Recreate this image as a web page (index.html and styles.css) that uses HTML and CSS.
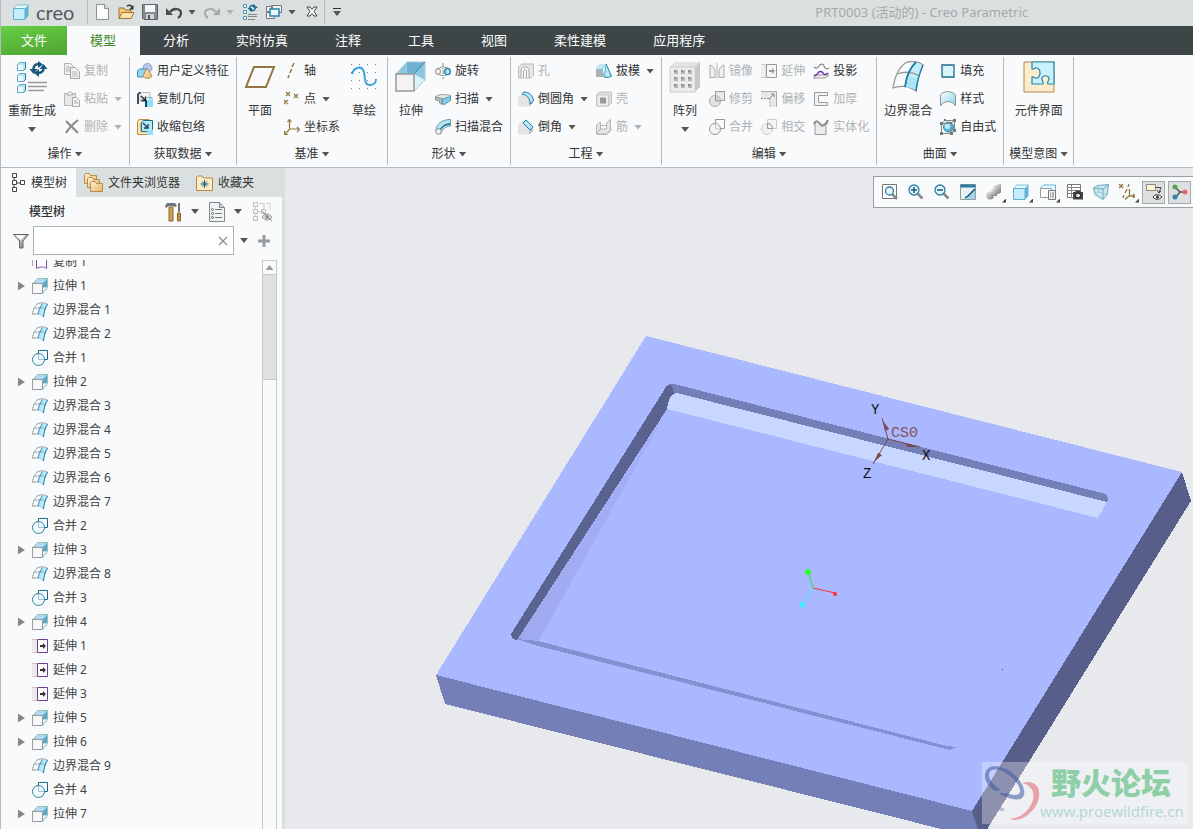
FILE: index.html
```html
<!DOCTYPE html>
<html lang="zh-CN">
<head>
    <meta charset="UTF-8">
    <meta name="viewport" content="width=device-width, initial-scale=1.0">
    <title>PRT0003 (活动的) - Creo Parametric</title>
    <link rel="stylesheet" href="styles.css">
</head>
<body>
    <!-- shared icons -->
    <svg class="defs" aria-hidden="true">
        <defs>
            <linearGradient id="blue" x1="0" y1="0" x2="1" y2="1">
                <stop offset="0" stop-color="#ffffff"/>
                <stop offset="1" stop-color="#86d3ee"/>
            </linearGradient>
            <linearGradient id="gold" x1="0" y1="0" x2="1" y2="1">
                <stop offset="0" stop-color="#fff3d6"/>
                <stop offset="1" stop-color="#e6b566"/>
            </linearGradient>
            <linearGradient id="gray" x1="0" y1="0" x2="1" y2="1">
                <stop offset="0" stop-color="#f4f4f4"/>
                <stop offset="1" stop-color="#777777"/>
            </linearGradient>
            <linearGradient id="wall" x1="0" y1="0" x2="1" y2="0.5">
                <stop offset="0" stop-color="#98a3e6"/>
                <stop offset="1" stop-color="#a7b2fb"/>
            </linearGradient>
        </defs>
        <symbol id="i-extrude" viewBox="0 0 32 32">
            <path d="M1 13 12 1h18v18L19 30z" fill="#c5e8f4"/>
            <path d="M1 13 12 1h18L19 13z" fill="#8cc8e0"/>
            <path d="M12 1h18v18H12z" fill="#6fb3d0"/>
            <path d="M19 13 30 1v18z" fill="#8dc6de"/>
            <path d="M19 13 30 19 19 30z" fill="#d9f3fb"/>
            <path d="M12 1h18v18L19 30M12 1 1 13" fill="none" stroke="#a9c9d6"/>
            <path d="M19 13 30 1" stroke="#2f87ab"/>
            <path d="M1 13h18v17H1z" fill="#f3f3f3" stroke="#999" stroke-width="1.5"/>
        </symbol>
        <symbol id="i-extrude-s" viewBox="0 0 16 16">
            <path d="M.500 5.500 6 .500h9.500v9L10.500 15z" fill="#a9dcee"/>
            <path d="M10.500 5.500 15.500.500v9l-5 0z" fill="#5fa9c9"/>
            <path d="M10.500 9.500h5l-5 5.500z" fill="#e0f6fd"/>
            <path d="M.500 5.500 6 .500h9.500v9l-5 6" fill="none" stroke="#9eb8c2"/>
            <path d="M.500 5.500h10v10H.500z" fill="#f7f7f7" stroke="#999"/>
        </symbol>
        <symbol id="i-blend" viewBox="0 0 32 32">
            <path d="M1 27C3 14 8 5 15 1c6-1 11-1 16 3-3 7-6 16-7 26-6-5-16-6-23-3z" fill="#f8fbfc" stroke="#999" stroke-width="1.3"/>
            <path d="M13 26c1-8 4-16 10-24 3 0 6 1 8 3-3 7-6 15-7 24-3-2-7-3-11-3z" fill="#c3edf9"/>
            <path d="M18 16c3 0 6 1 9 2l-3 11c-3-2-7-3-11-3 1-4 2-7 5-10z" fill="#a9e4f7"/>
            <path d="M5 13c8-3 17-2 22 2" fill="none" stroke="#999" stroke-width="1.3"/>
            <path d="M24 1C17 8 14 17 13 26" fill="none" stroke="#1a7ca5" stroke-width="1.8"/>
            <path d="M31 4c-3 7-6 16-7 26" fill="none" stroke="#1a7ca5" stroke-width="1.4"/>
        </symbol>
        <symbol id="i-blend-s" viewBox="0 0 16 16">
            <path d="M.500 12.500C1 7 3 3 6 1.500c3-1 6-1 9.500.500C13 6 12 10 11.500 15c-3-3-8-4-11-2.500z" fill="#f6fafc" stroke="#9a9fa2"/>
            <path d="M6 12c1-4 2-7 4.500-10.500l4.500.500C13 6 12 10 11.500 14.500z" fill="#b5e9f8"/>
            <path d="M2.500 6.500c4-1 8-1 11 .500" fill="none" stroke="#9a9fa2"/>
            <path d="M10.500 1.500C8 5 7 8 6 12M15.500 2C13 6 12 10 11.500 15" fill="none" stroke="#2b88ae"/>
        </symbol>
        <symbol id="i-merge" viewBox="0 0 16 16">
            <path d="M6.500.500h9v9h-9z" fill="#fff" stroke="#1c6a8a"/>
            <circle cx="6.500" cy="9.500" r="6" fill="#f2fafd" stroke="#2c7fa2"/>
            <path d="M6.500 4v5.500H12" fill="none" stroke="#9ccadd"/>
        </symbol>
        <symbol id="i-extend" viewBox="0 0 16 16">
            <path d="M0 1h5v14H0z" fill="#ebebeb"/>
            <path d="M0 1.500h5M0 14.500h5" stroke="#c4c4c4"/>
            <path d="M5.500 1.500h10v13h-10z" fill="#fff" stroke="#6f3f95"/>
            <path d="M8 7h3V5l3 3-3 3V9H8z" fill="#333"/>
        </symbol>
        <symbol id="i-cube" viewBox="0 0 16 16">
            <path d="M.500 4.500 4 1h11.500v11l-3.500 3.500z" fill="#5fb4d6"/>
            <path d="M.500 4.500 4 1h11.500L12 4.500z" fill="#e9fafe" stroke="#7cc4dd"/>
            <path d="M.500 4.500H12v11H.500z" fill="#c4eefb" stroke="#5fb0ce"/>
        </symbol>
        <symbol id="i-lens" viewBox="0 0 16 16">
            <path d="m9.500 9.500 5 5" stroke="#888" stroke-width="2.500"/>
            <circle cx="6" cy="6" r="5" fill="#e2f5fb" stroke="#2c7fa2" stroke-width="1.300"/>
        </symbol>
    </svg>

    <header class="titlebar">
        <div class="brand">
            <svg width="16" height="16"><use href="#i-cube"/></svg>
            <span>creo</span>
        </div>
        <div class="quick">
            <button aria-label="新建"><svg width="16" height="16" viewBox="0 0 16 16"><path d="M2.500.500h8l4 4v11h-12z" fill="#fcfcfc" stroke="#8d9193"/><path d="M10.500.500v4h4" fill="#ddd" stroke="#8d9193"/></svg></button>
            <button aria-label="打开"><svg width="16" height="16" viewBox="0 0 16 16"><path d="M1 14V4h5l1 2h6v8z" fill="#f5c773" stroke="#9d7430"/><path d="m1 14.500 3-6h12l-3 6z" fill="#fbe2a8" stroke="#9d7430"/><path d="M9 2c2-1 4-1 5 1" fill="none" stroke="#333" stroke-width="1.500"/><path d="M15.500 1v4.500H11z" fill="#333"/></svg></button>
            <button aria-label="保存"><svg width="16" height="16" viewBox="0 0 16 16"><path d="M.500.500h15v15H2l-1.500-1.500z" fill="#858b92" stroke="#5d6267"/><path d="M3 1h10v7H3z" fill="#f7f7f7"/><path d="M4 10h8v5H4z" fill="#cfd3d6"/><path d="M6 11h2v4H6z" fill="#555"/></svg></button>
            <span class="pair">
                <button aria-label="撤消"><svg width="16" height="16" viewBox="0 0 16 16"><path d="M4 8c4-5 11-3 11 1 0 2-1 4-3 5" fill="none" stroke="#4c4c4c" stroke-width="2.300"/><path d="M0 4v7h7z" fill="#4c4c4c"/></svg></button>
                <i class="arrow"></i>
            </span>
            <span class="pair off">
                <button aria-label="重做" disabled><svg width="16" height="16" viewBox="0 0 16 16"><path d="M12 8C8 3 1 5 1 9c0 2 1 4 3 5" fill="none" stroke="#a5a9aa" stroke-width="2"/><path d="M16 4v7H9z" fill="#a5a9aa"/></svg></button>
                <i class="arrow"></i>
            </span>
            <button aria-label="重新生成"><svg width="16" height="16" viewBox="0 0 16 16"><path d="M1.500.500h3v3h-3zM1.500 6.500h3v3h-3zM1.500 12.500h3v3h-3z" fill="#fff" stroke="#4496b8"/><path d="M6 10.500h9M6 12.500h9M6 15.500h7" stroke="#888"/><path d="M7.500 5c0-3 2-4 4-3M13.500 3c0 3-2 4-4 3" fill="none" stroke="#17688e" stroke-width="1.500"/><path d="m11 0 3 2-3 2zM10 4v4L7 6zM5.500 4h4l-2 2zM12 4h4l-2-2z" fill="#17688e"/></svg></button>
            <span class="pair">
                <button aria-label="窗口"><svg width="16" height="16" viewBox="0 0 16 16"><path d="M5.500 1.500h10v7h-10zM.500 8.500h8v6h-8zM.500 2.500h6v5h-6z" fill="#f3f3f3" stroke="#777"/><path d="M4 5h9v7H4z" fill="#eaf8fd" stroke="#2784aa" stroke-width="1.500"/></svg></button>
                <i class="arrow"></i>
            </span>
            <button aria-label="关闭"><svg width="16" height="16" viewBox="0 0 16 16"><path d="M3 3h3l2 2.500L10 3h3l-3 4.500 3 4.500h-3L8 9.500 6 12H3l3-4.500z" fill="#fff" stroke="#444"/></svg></button>
        </div>
        <button class="customize" aria-label="自定义"><i class="bar"></i><i class="arrow"></i></button>
        <span class="doc-title">PRT0003 (活动的) - Creo Parametric</span>
    </header>

    <nav class="tabs">
        <a class="file" href="#">文件</a>
        <a class="active" href="#">模型</a>
        <a href="#">分析</a>
        <a href="#">实时仿真</a>
        <a href="#">注释</a>
        <a href="#">工具</a>
        <a href="#">视图</a>
        <a href="#">柔性建模</a>
        <a href="#">应用程序</a>
    </nav>

    <section class="ribbon">
        <div class="group">
            <div class="group-body">
                <button class="big">
                    <svg width="32" height="32" viewBox="0 0 32 32"><g fill="#b9e6f5" stroke="#62a9c4"><path d="m1.500 3.500 2-2h6v6l-2 2h-6zM1.500 14.500l2-2h6v6l-2 2h-6zM1.500 25.500l2-2h6v6l-2 2h-6z"/></g><path d="M2 4h5v5H2zM2 15h5v5H2zM2 26h5v5H2z" fill="#effaff"/><path d="M9.500 1.500v6l-2 2M9.500 12.500v6l-2 2M9.500 23.500v6l-2 2" fill="none" stroke="#26799d"/><path d="M12 21.500h19M12 25.500h19M12 29.500h16" stroke="#999" stroke-width="1.500"/><path d="M17.500 8c0-3 2-5 5-5M27.500 7c0 3-2 5-5 5" fill="none" stroke="#17587a" stroke-width="2.500"/><path d="m22 0 5 3.500-5 3.500zM23 8v8l-5-4zM13.500 8h8l-4 5zM23.500 8h8l-4-5z" fill="#17587a"/></svg>
                    <span>重新生成</span><i class="arrow"></i>
                </button>
                <div class="col">
                    <button disabled><svg viewBox="0 0 16 16"><path d="M.500.500h6l3 3v8h-9z" fill="#eee" stroke="#b5b5b5"/><path d="M6.500 4.500h5l4 4v7h-9z" fill="#f1f1f1" stroke="#a5a5a5"/><path d="M2 4h4M2 6h4M2 8h4M8 9h5M8 11h6M8 13h6" stroke="#b5b5b5"/></svg><span>复制</span></button>
                    <button disabled><svg viewBox="0 0 16 16"><path d="M.500 2.500h11v12H.500z" fill="#e8e8e8" stroke="#b5b5b5"/><path d="M3 3 6 .500 9 3v1H3z" fill="#f8f8f8" stroke="#aaa"/><path d="M8.500 6.500h4l3 3v6h-7z" fill="#f4f4f4" stroke="#a5a5a5"/><path d="M10 10h3M10 12h4" stroke="#aaa"/></svg><span>粘贴</span><i class="arrow"></i></button>
                    <button disabled><svg viewBox="0 0 16 16"><path d="M2 2c4 4 8 8 12 12M14 1C9 5 5 9 2 14" stroke="#8c8c8c" stroke-width="2.200" fill="none"/></svg><span>删除</span><i class="arrow"></i></button>
                </div>
            </div>
            <div class="caption">操作<i class="arrow"></i></div>
        </div>

        <div class="group">
            <div class="group-body">
                <div class="col">
                    <button><svg viewBox="0 0 16 16"><circle cx="10.500" cy="5" r="4.500" fill="#b8c8ec" stroke="#8a9bc9"/><path d="m.500 8 2-2h6v6l-2 2h-6z" fill="#8fd6f0" stroke="#3b93b6"/><path d="m10 5 5 8c-1 3-8 3-9 0z" fill="url(#gold)" stroke="#b98b43"/></svg><span>用户定义特征</span></button>
                    <button><svg viewBox="0 0 16 16"><path d="M0 13V3l2-2h2v2H2v10z" fill="#444c55"/><path d="M3 3.500 5 1.500h8v7l-2 2H3z" fill="#f1f1f1" stroke="#bbb"/><path d="m4 5 4 4M8.500 5.500v4h-4" stroke="#222" stroke-width="1.300" fill="none"/><path d="M8 9h8v7H8z" fill="#8fe0fa"/><path d="M8 9h2v7H8z" fill="#0f4b66"/><path d="M10 6.500h5v3" stroke="#61bfe2" fill="none"/></svg><span>复制几何</span></button>
                    <button><svg viewBox="0 0 16 16"><path d="M.500 2.500 2 .500h10V4h-8v8h7v3.500H.500z" fill="#fbe0a8" stroke="#be9243"/><path d="m4.500 3.500 2-2h9v9l-2 2h-9z" fill="#b5e7f7" stroke="#1d6d90"/><path d="m6 4 4 4M11 5v4H7" stroke="#153f54" stroke-width="1.300" fill="none"/><path d="M10 11h6v5h-6z" fill="#8fe0fa"/></svg><span>收缩包络</span></button>
                </div>
            </div>
            <div class="caption">获取数据<i class="arrow"></i></div>
        </div>

        <div class="group">
            <div class="group-body">
                <button class="big">
                    <svg width="32" height="32" viewBox="0 0 32 32"><path d="M10 6h20l-8 20H2z" fill="none" stroke="#93773f" stroke-width="2"/></svg>
                    <span>平面</span>
                </button>
                <div class="col">
                    <button><svg viewBox="0 0 16 16"><path d="M10 0 8 4M7.500 6 6 10M5 12l-1 3" stroke="#93773f" stroke-width="1.500"/></svg><span>轴</span></button>
                    <button><svg viewBox="0 0 16 16"><path d="m2 1 4 4M6 1 2 5M10 3l4 4M14 3l-4 4M0 9l4 4M4 9l-4 4" stroke="#93773f" stroke-width="1.300"/></svg><span>点</span><i class="arrow"></i></button>
                    <button><svg viewBox="0 0 16 16"><path d="M5.500 1v9H15M5.500 10.500 1 15M3.500 3l2-2.500 2 2.500M13 8l2.500 2.500L13 13M.500 12v3.500H4" stroke="#93773f" fill="none" stroke-width="1.200"/></svg><span>坐标系</span></button>
                </div>
                <button class="big">
                    <svg width="32" height="32" viewBox="0 0 32 32"><g fill="#777"><path d="M3 3h1v1H3zM11 3h1v1h-1zM19 3h1v1h-1zM27 3h1v1h-1zM3 11h1v1H3zM11 11h1v1h-1zM19 11h1v1h-1zM27 11h1v1h-1zM3 19h1v1H3zM11 19h1v1h-1zM19 19h1v1h-1zM27 19h1v1h-1zM3 27h1v1H3zM11 27h1v1h-1zM19 27h1v1h-1zM27 27h1v1h-1z"/></g><path d="M4 13c2-7 10-9 12-2 1 5 0 13 6 13 4 0 6-3 6-6" fill="none" stroke="#3da4dc" stroke-width="2"/></svg>
                    <span>草绘</span>
                </button>
            </div>
            <div class="caption">基准<i class="arrow"></i></div>
        </div>

        <div class="group">
            <div class="group-body">
                <button class="big">
                    <svg width="32" height="32"><use href="#i-extrude"/></svg>
                    <span>拉伸</span>
                </button>
                <div class="col">
                    <button><svg viewBox="0 0 16 16"><path d="M8 0v16" stroke="#888" stroke-dasharray="4 1 1 1"/><path d="M3 5.500c4-2 8-2 10 0M3 11c4 2 7 2 10 0" fill="none" stroke="#999"/><ellipse cx="3" cy="8.500" rx="2.500" ry="3" fill="#eee" stroke="#888"/><ellipse cx="12.500" cy="8.500" rx="2.800" ry="3.200" fill="#aee2f5" stroke="#2681a7" stroke-width="1.300"/></svg><span>旋转</span></button>
                    <button><svg viewBox="0 0 16 16"><path d="M.500 6C4 3 8 3 15.500 4.500v4L8 10z" fill="#e3e5e6" stroke="#9a9fa2"/><path d="M.500 6 7 7.500v6L4.500 12V10L.500 9z" fill="#b9bdbf" stroke="#8f9496"/><path d="m7.500 8 8-2.500v4l-6 4-2-.500z" fill="#8bcbe3" stroke="#4b9bb9"/></svg><span>扫描</span><i class="arrow"></i></button>
                    <button><svg viewBox="0 0 16 16"><path d="M1 12C1 5 7 .500 15.500.500V7C11 7 7 10 5.500 15z" fill="#b8e4f2" stroke="#5a9cb5"/><path d="M5 12C6 8 10 5 15 5" stroke="#186482" fill="none" stroke-width="1.300"/><circle cx="3.500" cy="12.500" r="2.800" fill="#f4f4f4" stroke="#888"/></svg><span>扫描混合</span></button>
                </div>
            </div>
            <div class="caption">形状<i class="arrow"></i></div>
        </div>

        <div class="group">
            <div class="group-body">
                <div class="col">
                    <button disabled><svg viewBox="0 0 16 16"><path d="m.500 4 3-3h12v11l-3 3H.500z" fill="#e6e6e6" stroke="#bbb"/><path d="M3 15V7c0-4 8-4 8 0v8M5.500 15V8c0-2 3-2 3 0v7" fill="#f6f6f6" stroke="#aaa"/></svg><span>孔</span></button>
                    <button><svg viewBox="0 0 16 16"><path d="M0 6 4 2h4l4 10-1 3.500H0z" fill="#e4e4e4"/><path d="m11 12 4-3v3l-4 3.500z" fill="#bbb"/><path d="m4 3 2-2c5 0 9 3 9.500 9L12 13c0-6-3-9-8-10z" fill="#b4e8f8" stroke="#237da2"/></svg><span>倒圆角</span><i class="arrow"></i></button>
                    <button><svg viewBox="0 0 16 16"><path d="M0 6 4 2h4l4 10-1 3.500H0z" fill="#e4e4e4"/><path d="m11 12 4-3v3l-4 3.500z" fill="#bbb"/><path d="m5 4 3-3 7 7-3 3z" fill="#b4e8f8" stroke="#237da2"/></svg><span>倒角</span><i class="arrow"></i></button>
                </div>
                <div class="col">
                    <button><svg viewBox="0 0 16 16"><path d="M0 4 3 1h6v13H0z" fill="#c6e7f2"/><path d="M0 6h7v8H0z" fill="#a9b1b5"/><path d="m8 14 2-13 5.500 12-3 1.500z" fill="#b4e8f8" stroke="#237da2"/><path d="m10 1-4 5 2 8" fill="#d7f3fb" stroke="#7fbfd6"/></svg><span>拔模</span><i class="arrow"></i></button>
                    <button disabled><svg viewBox="0 0 16 16"><path d="m.500 4 3-3h12v11l-3 3H.500z" fill="#dedede" stroke="#c4c4c4"/><path d="M1 4h11.500v11H1z" fill="#ececec" stroke="#c9c9c9"/><path d="M4 6.500h6v6H4z" fill="#999"/></svg><span>壳</span></button>
                    <button disabled><svg viewBox="0 0 16 16"><path d="M.500 15V6l4-3v7h6V4l4-3.500V11l-4 4z" fill="#e4e4e4" stroke="#b4b4b4"/><path d="M4.500 10 1 14M4.500 6.500h6" fill="none" stroke="#b4b4b4"/><path d="M1 15.500h10l4.500-5" fill="none" stroke="#999" stroke-dasharray="1 1"/></svg><span>筋</span><i class="arrow"></i></button>
                </div>
            </div>
            <div class="caption">工程<i class="arrow"></i></div>
        </div>

        <div class="group">
            <div class="group-body">
                <button class="big">
                    <svg width="32" height="32" viewBox="0 0 32 32"><path d="m1 6 5-5h25v25l-5 5H1z" fill="#c9c9c9"/><path d="m1 6 5-5h25l-5 5z" fill="#e3e3e3"/><path d="M1 6h25v25H1z" fill="#ececec" stroke="#ccc"/><g fill="#b5b5b5"><path d="M5 9h4v4H5zM12 9h4v4h-4zM19 9h4v4h-4zM5 16h4v4H5zM12 16h4v4h-4zM19 16h4v4h-4zM5 23h4v4H5zM12 23h4v4h-4zM19 23h4v4h-4z"/></g><g fill="#8b8b8b"><path d="M5 9h2v2H5zM12 9h2v2h-2zM19 9h2v2h-2zM5 16h2v2H5zM12 16h2v2h-2zM19 16h2v2h-2zM5 23h2v2H5zM12 23h2v2h-2zM19 23h2v2h-2z"/></g></svg>
                    <span>阵列</span><i class="arrow"></i>
                </button>
                <div class="col">
                    <button disabled><svg viewBox="0 0 16 16"><path d="M1 14.500V2c3 1 4 3 5 5v7.500zM15 14.500V2c-3 1-4 3-5 5v7.500z" fill="#f0f0f0" stroke="#aaa"/><path d="M8 0v16" stroke="#bbb"/></svg><span>镜像</span></button>
                    <button disabled><svg viewBox="0 0 16 16"><path d="M6.500.500h9v9h-9z" fill="#e8e8e8" stroke="#999"/><circle cx="6" cy="10" r="5.500" fill="#e3e3e3" stroke="#aaa"/><path d="M6.500 5v5H11" fill="#ccc" stroke="#999"/></svg><span>修剪</span></button>
                    <button disabled><svg viewBox="0 0 16 16"><path d="M6.500.500h9v9h-9z" fill="#fafafa" stroke="#999"/><circle cx="6" cy="10" r="5.500" fill="#f6f6f6" stroke="#999"/><path d="M6.500 5v5H11" fill="none" stroke="#c9c9c9"/></svg><span>合并</span></button>
                </div>
                <div class="col">
                    <button disabled><svg viewBox="0 0 16 16"><path d="M0 1.500h5v13H0" fill="#efefef" stroke="#ccc"/><path d="M5.500 1.500h10v13h-10z" fill="#f5f5f5" stroke="#999"/><path d="M8 7h3V5l3 3-3 3V9H8z" fill="#999"/></svg><span>延伸</span></button>
                    <button disabled><svg viewBox="0 0 16 16"><path d="M0 .500h15.500V16H10V7H0z" fill="#e8e8e8"/><path d="M0 .500h15.500V16" fill="none" stroke="#aaa"/><path d="M0 7.500h9V16" fill="none" stroke="#888" stroke-dasharray="2 1"/><path d="m8 8 5-5M10 3h3v3" fill="none" stroke="#888"/></svg><span>偏移</span></button>
                    <button disabled><svg viewBox="0 0 16 16"><path d="M6.500.500h9v9h-9z" fill="#f4f4f4" stroke="#ccc"/><circle cx="6" cy="10" r="5.500" fill="#f1f1f1" stroke="#ccc"/><path d="M6.500 4.500c3 0 5 2 5 5h-5z" fill="#eee" stroke="#999"/></svg><span>相交</span></button>
                </div>
                <div class="col">
                    <button><svg viewBox="0 0 16 16"><path d="M1 4c2 2 4 1 5-1s4-3 5 0 3 3 5 2" fill="none" stroke="#888" stroke-width="1.200"/><path d="m0 15 4-3h12l-4 3z" fill="#eee" stroke="#999"/><path d="M1 12c2 1 3 0 4-2s4-2 5 0 3 2 5 0" fill="none" stroke="#762fa6" stroke-width="1.600"/></svg><span>投影</span></button>
                    <button disabled><svg viewBox="0 0 16 16"><path d="M14.500 1.500h-13v13h13v-3h-9v-7h9z" fill="#f4f4f4" stroke="#999"/></svg><span>加厚</span></button>
                    <button disabled><svg viewBox="0 0 16 16"><path d="M.500 4H2v11.500h11V4h2.500" fill="#ececec" stroke="#999"/><path d="M1 5c2-4 4-3 6 0s5 2 8-4" fill="none" stroke="#8a8a8a" stroke-width="2"/></svg><span>实体化</span></button>
                </div>
            </div>
            <div class="caption">编辑<i class="arrow"></i></div>
        </div>

        <div class="group">
            <div class="group-body">
                <button class="big">
                    <svg width="32" height="32"><use href="#i-blend"/></svg>
                    <span>边界混合</span>
                </button>
                <div class="col">
                    <button><svg viewBox="0 0 16 16"><path d="M2 2h12v12H2z" fill="#c9f0fb" stroke="#1e6c8d" stroke-width="1.300"/><path d="m3 9 6-6M4 12l8-9M7 13l6-7M10 13l3-3" stroke="#fff"/></svg><span>填充</span></button>
                    <button><svg viewBox="0 0 16 16"><path d="M.500 15V4C4-1 12 0 15.500 4v11C12 9 4 9 .500 15z" fill="url(#blue)" stroke="#8d9598"/></svg><span>样式</span></button>
                    <button><svg viewBox="0 0 16 16"><circle cx="8.500" cy="8" r="5" fill="#57b9df" stroke="#2b85a9"/><circle cx="7.500" cy="7" r="3" fill="#b5e8f7"/><path d="M1.500 4.500 5 1.500h9.500V11L11 14.500H1.500zM1.500 4.500H11v10M11 4.500l3.500-3" fill="none" stroke="#888"/><path d="M0 3h3v3H0zM10 3h2v2h-2zM13 0h3v3h-3zM4 0h2v2H4zM0 13h3v3H0zM10 13h3v3h-3zM13 10h3v3h-3z" fill="#777"/></svg><span>自由式</span></button>
                </div>
            </div>
            <div class="caption">曲面<i class="arrow"></i></div>
        </div>

        <div class="group">
            <div class="group-body">
                <button class="big">
                    <svg width="32" height="32" viewBox="0 0 32 32"><path d="M1 1h30v30H1z" fill="#fdeccb" stroke="#b18c4b"/><path d="M9 1h22v22h-6c-2-2 2-4 1-6-1-3-6-3-7 0-1 2 2 4 1 6H9v-7c2-1 3 2 5 1 4-1 4-9 0-10-2-1-3 2-5 1z" fill="#c8f1fd" stroke="#2687ad" stroke-width="1.200"/></svg>
                    <span>元件界面</span>
                </button>
            </div>
            <div class="caption">模型意图<i class="arrow"></i></div>
        </div>
    </section>

    <main>
        <aside class="navigator">
            <nav class="nav-tabs">
                <a class="active" href="#"><svg width="16" height="20" viewBox="0 0 16 20"><path d="M3 5v10M3 10h6" stroke="#444"/><path d="M1.500.500h4v4h-4zM1.500 7.500h4v4h-4zM1.500 14.500h4v4h-4zM9.500 7.500h4v4h-4z" fill="#fff" stroke="#444"/></svg>模型树</a>
                <a href="#"><svg width="20" height="20" viewBox="0 0 20 20"><g fill="url(#gold)" stroke="#b78d48"><path d="M.500 10.500V1.500l1-1h4l1 2h6v8z"/><path d="M3.500 14.500V5.500l1-1h4l1 2h6v8z"/><path d="M6.500 18.500v-9l1-1h4l1 2h6v8z"/></g></svg>文件夹浏览器</a>
                <a href="#"><svg width="18" height="16" viewBox="0 0 18 16"><path d="M.500 15.500V2l1-1h5l1 2h9v12.500z" fill="#fcedca" stroke="#b58a44"/><path d="M8.500 5v8M4.500 9h8M6 6.500l5 5M11 6.500l-5 5" stroke="#1b5c7c"/></svg>收藏夹</a>
            </nav>
            <div class="panel">
                <div class="panel-head">
                    <h2>模型树</h2>
                    <button aria-label="设置"><svg width="20" height="20" viewBox="0 0 20 20"><path d="M1 4 3 1h8l2 3-2 1-2-1H5L2 6z" fill="#6d7478"/><path d="M5 5h4v14H5z" fill="#c9a05e" stroke="#8c6428"/><path d="M14 1h2v9h-2z" fill="#777"/><path d="M13.500 11h3v8h-3z" fill="#c98e45" stroke="#8c6428"/></svg><i class="arrow"></i></button>
                    <button aria-label="显示"><svg width="18" height="20" viewBox="0 0 18 20"><path d="M.500.500h10l5 5v14H.500z" fill="#f1f4f5" stroke="#81888b"/><path d="M10.500.500v5h5" fill="#ccc" stroke="#81888b"/><path d="M6 7.500h7M6 11.500h7M6 15.500h7" stroke="#777"/><g fill="#fff" stroke="#666"><circle cx="3.500" cy="7.500" r="1"/><circle cx="3.500" cy="11.500" r="1"/><circle cx="3.500" cy="15.500" r="1"/></g></svg><i class="arrow"></i></button>
                    <button aria-label="层显示" disabled><svg width="21" height="20" viewBox="0 0 21 20"><path d="M7 1.500h5V10M14 1.500h4V8M3 5v10M3 10h10" fill="none" stroke="#ccc"/><path d="M1.500.500h4v4h-4zM1.500 7.500h4v4h-4zM1.500 14.500h4v4h-4zM9.500 7.500h4v4h-4z" fill="#f8f8f8" stroke="#bbb"/><path d="M10 15c3-4 7-4 10 0-3 4-7 4-10 0z" fill="#ddd" stroke="#999"/><circle cx="15" cy="15" r="2" fill="#999"/><path d="m10 9 10 10" stroke="#888"/></svg></button>
                </div>
                <div class="filter">
                    <svg width="16" height="16" viewBox="0 0 16 16"><path d="M.500 1.500h15L10 8v7H6.500V8z" fill="url(#gray)" stroke="#666"/><path d="M3 2.500h9L8 7z" fill="#fff"/></svg>
                    <div class="field">
                        <input type="text" aria-label="过滤">
                        <button aria-label="清除"><svg width="10" height="10" viewBox="0 0 10 10"><path d="m1 1 8 8M9 1 1 9" stroke="#8b8f91" stroke-width="1.300"/></svg></button>
                    </div>
                    <i class="arrow"></i>
                    <button aria-label="添加"><svg width="12" height="12" viewBox="0 0 12 12"><path d="M6 0v12M0 6h12" stroke="#9a9d9f" stroke-width="3"/></svg></button>
                </div>
                <div class="tree-wrap">
                    <ul class="tree">
                        <li><svg viewBox="0 0 16 16"><path d="M.500 12V4" stroke="#aaa"/><path d="M4.500 14.500V4c3 2 8 2 10 0v10.500c-2-2-7-2-10 0z" fill="#fff" stroke="#7d52a5"/></svg>复制 1</li>
                        <li class="parent"><svg><use href="#i-extrude-s"/></svg>拉伸 1</li>
                        <li><svg><use href="#i-blend-s"/></svg>边界混合 1</li>
                        <li><svg><use href="#i-blend-s"/></svg>边界混合 2</li>
                        <li><svg><use href="#i-merge"/></svg>合并 1</li>
                        <li class="parent"><svg><use href="#i-extrude-s"/></svg>拉伸 2</li>
                        <li><svg><use href="#i-blend-s"/></svg>边界混合 3</li>
                        <li><svg><use href="#i-blend-s"/></svg>边界混合 4</li>
                        <li><svg><use href="#i-blend-s"/></svg>边界混合 5</li>
                        <li><svg><use href="#i-blend-s"/></svg>边界混合 6</li>
                        <li><svg><use href="#i-blend-s"/></svg>边界混合 7</li>
                        <li><svg><use href="#i-merge"/></svg>合并 2</li>
                        <li class="parent"><svg><use href="#i-extrude-s"/></svg>拉伸 3</li>
                        <li><svg><use href="#i-blend-s"/></svg>边界混合 8</li>
                        <li><svg><use href="#i-merge"/></svg>合并 3</li>
                        <li class="parent"><svg><use href="#i-extrude-s"/></svg>拉伸 4</li>
                        <li><svg><use href="#i-extend"/></svg>延伸 1</li>
                        <li><svg><use href="#i-extend"/></svg>延伸 2</li>
                        <li><svg><use href="#i-extend"/></svg>延伸 3</li>
                        <li class="parent"><svg><use href="#i-extrude-s"/></svg>拉伸 5</li>
                        <li class="parent"><svg><use href="#i-extrude-s"/></svg>拉伸 6</li>
                        <li><svg><use href="#i-blend-s"/></svg>边界混合 9</li>
                        <li><svg><use href="#i-merge"/></svg>合并 4</li>
                        <li class="parent"><svg><use href="#i-extrude-s"/></svg>拉伸 7</li>
                    </ul>
                    <div class="scrollbar">
                        <button aria-label="向上滚动"></button>
                        <div class="thumb"></div>
                    </div>
                </div>
            </div>
        </aside>

        <section class="viewport">
            <svg class="scene" viewBox="285 168 908 661" preserveAspectRatio="xMidYMid slice">
                <g shape-rendering="crispEdges">
                    <path d="M646 336 1182 472 972 811 436 675z" fill="#aab8ff"/>
                    <path d="M436 675 972 811 981 839 445 704z" fill="#747fb8"/>
                    <path d="M1182 472 1191 501 981 839 972 811z" fill="#575e8a"/>
                    <!-- pocket -->
                    <path d="M667 411 517 640 538 642z" fill="url(#wall)"/>
                    <path d="M674 384 1106 494Q1109 496 1107 503L677 394 668 408 664 390Q667 383 674 384z" fill="#747fb8"/>
                    <path d="M666 387Q668 384 672 386L674 394 667 409 517 640Q511 639 511 634z" fill="#5a638f"/>
                    <path d="M677 393 1107 502 1098 518 667 409Q669 394 677 393z" fill="#c8d7ff"/>
                    <path d="M517 639 538 641 947 746 957 747 950 750 534 645z" fill="#8590d0"/>
                    <path d="M1002 669h1v1h-1z" fill="#444"/>
                </g>
                <g stroke="#7b4a50" fill="#7b4a50">
                    <path d="M888 439 882 418M888 439 920 447M888 439 873 464" fill="none"/>
                    <path d="m883 421 6 8-4 2zM918 447l-12-4 1 4zM874 462l8-7-4-2z" stroke="none"/>
                </g>
                <g class="axis">
                    <text x="871" y="414">Y</text>
                    <text x="922" y="460">X</text>
                    <text x="863" y="478">Z</text>
                    <text class="csys" x="891" y="437">CS0</text>
                </g>
                <path d="M813 588 808 572" stroke="#20f020"/>
                <path d="m813 588 22 5" stroke="#ff3030"/>
                <path d="m813 588-11 17" stroke="#35f3ff"/>
                <circle cx="808" cy="572" r="3" fill="#2bff2b"/>
                <circle cx="835" cy="594" r="2" fill="#ff3030"/>
                <circle cx="802" cy="605" r="2.500" fill="#35f3ff"/>
                <g class="watermark">
                    <path d="M982 762h206v62H982z" fill="#fff" opacity=".32"/>
                    <g opacity=".55">
                        <path fill-rule="evenodd" d="M985 775c1-10 11-11 21-6 12 6 20 18 18 26-2 7-13 5-22 0-11-5-18-13-17-20zm4 0c0 5 6 12 14 16 8 5 16 5 17 1 1-6-7-15-16-20-8-4-15-3-15 3z" fill="#3c5aa0"/>
                        <path d="M1006 792c-9-2-15 2-14 8 0 5 5 9 12 10" fill="none" stroke="#8b90ab" stroke-width="3"/>
                        <path d="M1022 783c14-4 20 6 16 18-4 12-18 22-28 18 11-1 20-9 23-19 2-8-2-15-11-17z" fill="#e2626c"/>
                    </g>
                    <text class="wm-name" x="1051" y="794">野火论坛</text>
                    <text class="wm-url" x="1040" y="817">www.proewildfire.cn</text>
                </g>
            </svg>

            <div class="view-tools">
                <button aria-label="重新调整"><svg viewBox="0 0 16 16"><path d="M.500.500h14v14H.500z" fill="#fff" stroke="#777"/><path d="m10 10 5 5" stroke="#888" stroke-width="2.500"/><circle cx="7.500" cy="7" r="4" fill="#e2f5fb" stroke="#2c7fa2" stroke-width="1.300"/></svg></button>
                <button aria-label="放大"><svg viewBox="0 0 16 16"><use href="#i-lens"/><path d="M3 6h6M6 3v6" stroke="#17587a" stroke-width="1.500"/></svg></button>
                <button aria-label="缩小"><svg viewBox="0 0 16 16"><use href="#i-lens"/><path d="M3 6h6" stroke="#17587a" stroke-width="1.500"/></svg></button>
                <button aria-label="重画"><svg viewBox="0 0 16 16"><path d="M.500.500h15v15H.500z" fill="#e6f4f9" stroke="#999"/><path d="M.500.500h15v3H.500z" fill="#2a7c9e"/><path d="M15 4v11H5c1-2 2-2 4-3z" fill="#9fd8ec"/><path d="m15 5-7 7-3 2" fill="none" stroke="#164d68" stroke-width="1.500"/></svg></button>
                <button class="drop" aria-label="渲染选项"><svg viewBox="0 0 16 16"><path d="M7 5c0-5 4-4 8-5v8c-1 2-3 2-5 2z" fill="url(#gray)"/><path d="M5 5h6v7H5z" fill="url(#gray)"/><circle cx="4" cy="11.500" r="4" fill="url(#gray)"/></svg></button>
                <button class="drop" aria-label="显示样式"><svg><use href="#i-cube"/></svg></button>
                <button class="drop" aria-label="已保存方向"><svg viewBox="0 0 16 16"><path d="m.500 4 3-3h12v8" fill="#e8f8fd" stroke="#5fb7d8"/><path d="M.500 4.500h11v9H.500z" fill="#fbfeff" stroke="#999"/><path d="M8.500 6.500h7v9h-7z" fill="#f4f4f4" stroke="#777"/><path d="M10 9h1M12 9h2M10 11h1M12 11h2M10 13h1M12 13h2" stroke="#666"/></svg></button>
                <button aria-label="视图管理器"><svg viewBox="0 0 16 16"><path d="M.500.500h13v13H.500z" fill="#fff" stroke="#777"/><path d="M1 3.500h12M1 6.500h12M1 9.500h12M4.500 1v12" stroke="#888"/><path d="M6 8h2l1-1.500h4L14 8h2v7.500H6z" fill="#444"/><circle cx="11" cy="11.500" r="2.500" fill="#ddd" stroke="#111"/></svg></button>
                <button aria-label="透视图"><svg viewBox="0 0 16 16"><path d="m.500 4 4-2.500 11-1L14 11l-4 4.500-8-5z" fill="#cbe8f1" stroke="#6fa6bb"/><path d="m.500 4 9.500 1v10.500M10 5l5.500-4.500" fill="none" stroke="#6fa6bb"/><path d="m4.500 1.500 1 6.500 8.500 3M5.500 8 2 10.500" fill="none" stroke="#9cc6d5"/></svg></button>
                <button class="drop" aria-label="基准显示过滤器"><svg viewBox="0 0 16 16"><path d="m0 0 4 4M4 0 0 4M10 0 9 3M8 5 6 9M5 11l-1 3M10.500 5v7H16M10 12l-4 3.500M14 10l2 2-2 2" fill="none" stroke="#93773f" stroke-width="1.300"/></svg></button>
                <button class="on" aria-label="注释显示"><svg viewBox="0 0 16 16"><path d="M.500.500h9v6h-9z" fill="#fff4d3" stroke="#888"/><path d="M10 3.500h5l-2 5M11 6l2 3 2-2" fill="none" stroke="#444"/><path d="M7 13c2-3 6-3 9 0-3 3-7 3-9 0z" fill="#fff" stroke="#333"/><circle cx="11.500" cy="13" r="1.500" fill="#333"/></svg></button>
                <button class="on" aria-label="旋转中心"><svg viewBox="0 0 16 16"><path d="m3 3 5 5-5 6M8 8h5" fill="none" stroke="#555" stroke-width="1.500"/><circle cx="3" cy="3" r="2.500" fill="#55a653"/><circle cx="13" cy="8" r="2.500" fill="#e66a68"/><circle cx="3" cy="13" r="2.500" fill="#2f84b2"/></svg></button>
            </div>
        </section>
    </main>
</body>
</html>
```
FILE: styles.css
```css
* {
    box-sizing: border-box;
}

body {
    display: flex;
    flex-direction: column;
    height: 100vh;
    margin: 0;
    overflow: hidden;
    border-left: 1px solid #b4babd;
    background-color: #f8fafc;
    color: #333;
    font-family: "Noto Sans", "Noto Sans CJK SC", sans-serif;
    font-size: 12px;
    line-height: 16px;
}

button {
    display: flex;
    align-items: center;
    padding: 0;
    border: none;
    background: none;
    color: inherit;
    font: inherit;
    white-space: nowrap;
}

button:disabled {
    color: #b0b2b3;
}

a {
    color: inherit;
    text-decoration: none;
}

svg {
    display: block;
    flex: none;
}

.defs {
    position: absolute;
    width: 0;
    height: 0;
}

.arrow {
    flex: none;
    width: 8px;
    height: 5px;
    background-color: #555;
    clip-path: polygon(0 0, 100% 0, 50% 100%);
}

.off .arrow,
button:disabled .arrow {
    background-color: #b0b2b3;
}

/* title bar */
.titlebar {
    display: flex;
    align-items: center;
    flex: none;
    height: 26px;
    padding-bottom: 2px;
    background-color: #dae0df;
}

.brand {
    display: flex;
    align-items: center;
    gap: 7px;
    width: 87px;
    height: 24px;
    padding-left: 12px;
    border-right: 1px solid #b4babd;
    color: #55595b;
    font-family: Lato, sans-serif;
    font-size: 20px;
}

.quick {
    display: flex;
    gap: 8px;
    padding: 0 4px 0 6px;
}

.pair {
    display: flex;
    align-items: center;
    gap: 6px;
}

.customize {
    flex-direction: column;
    gap: 2px;
    height: 24px;
    padding: 8px 0 0 8px;
    border-left: 1px solid #b4babd;
}

.bar {
    width: 8px;
    height: 1px;
    background-color: #333;
}

.doc-title {
    margin-left: auto;
    padding-right: 165px;
    color: #a5a9aa;
    font-size: 13px;
}

/* ribbon tabs */
.tabs {
    display: flex;
    flex: none;
    height: 29px;
    background-color: #3d4546;
    color: #fff;
    font-size: 13px;
    line-height: 29px;
}

.tabs a {
    padding: 0 24px 0 23px;
}

.tabs .file {
    padding: 0 20px;
    background: linear-gradient(170deg, #65cf43, #4fa333);
}

.tabs .active {
    background-color: #f8fafc;
    color: #3e8b28;
}

/* ribbon */
.ribbon {
    display: flex;
    flex: none;
    height: 113px;
    padding: 2px 0;
    border-bottom: 1px solid #b4bcbf;
}

.group {
    display: flex;
    flex-direction: column;
    border-right: 1px solid #b4babd;
}

.group-body {
    display: flex;
    align-items: flex-start;
    justify-content: center;
    gap: 8px;
    height: 86px;
    padding: 0 7px;
}

.big {
    flex-direction: column;
    min-width: 32px;
    padding-top: 4px;
}

.big span {
    margin: 10px 0 8px;
}

.col {
    display: flex;
    flex-direction: column;
    align-items: flex-start;
}

.col button {
    gap: 4px;
    height: 28px;
}

.col svg {
    width: 16px;
    height: 16px;
}

.col .arrow {
    margin-left: 2px;
}

.caption {
    display: flex;
    justify-content: center;
    align-items: center;
    gap: 3px;
    height: 22px;
    padding: 0 5px;
}

/* navigator */
main {
    display: flex;
    flex: 1;
    min-height: 0;
}

.navigator {
    display: flex;
    flex-direction: column;
    flex: none;
    width: 284px;
    background-color: #dae0df;
}

.nav-tabs {
    display: flex;
    flex: none;
    height: 29px;
}

.nav-tabs a {
    display: flex;
    align-items: center;
    gap: 4px;
    padding: 0 8px;
}

.nav-tabs .active {
    gap: 4px;
    padding: 0 9px 0 10px;
    background-color: #f8fafc;
}

.panel {
    display: flex;
    flex-direction: column;
    flex: 1;
    min-height: 0;
    margin-right: 3px;
    background-color: #f8fafc;
}

.panel-head {
    display: flex;
    align-items: center;
    gap: 10px;
    height: 29px;
    padding: 0 9px 0 28px;
}

.panel-head h2 {
    margin: 0 auto 0 0;
    font-size: 12px;
    font-weight: 500;
}

.panel-head button {
    gap: 7px;
}

.filter {
    display: flex;
    align-items: center;
    gap: 4px;
    height: 29px;
    margin-bottom: 5px;
    padding: 0 12px;
}

.field {
    display: flex;
    flex: 1;
    align-items: center;
    height: 29px;
    padding-right: 5px;
    border: 1px solid #a9b5b5;
    background-color: #fff;
}

.field input {
    flex: 1;
    min-width: 0;
    height: 27px;
    border: none;
    outline: none;
    background: none;
    font: inherit;
}

.filter .arrow {
    margin: 0 6px 0 2px;
}

.tree-wrap {
    display: flex;
    flex: 1;
    min-height: 0;
    overflow: hidden;
}

/* scrolled part way into the first row */
.tree {
    flex: 1;
    margin: -10px 0 0;
    padding: 0;
    list-style: none;
    color: #444;
}

.tree li {
    display: flex;
    align-items: center;
    gap: 5px;
    height: 24px;
    padding-left: 31px;
}

.tree svg {
    width: 16px;
    height: 16px;
}

.tree .parent {
    padding-left: 17px;
}

.tree .parent::before {
    content: "";
    width: 7px;
    height: 9px;
    margin-right: 2px;
    background-color: #888;
    clip-path: polygon(0 0, 100% 50%, 0 100%);
}

.scrollbar {
    display: flex;
    flex-direction: column;
    width: 15px;
    margin-right: 5px;
    border: 1px solid #c6c9cb;
    border-bottom: none;
    background-color: #fafafa;
}

.scrollbar button {
    justify-content: center;
    height: 14px;
    border-bottom: 1px solid #c6c9cb;
}

.scrollbar button::before {
    content: "";
    width: 8px;
    height: 5px;
    background-color: #999;
    clip-path: polygon(50% 0, 100% 100%, 0 100%);
}

.thumb {
    height: 105px;
    border-bottom: 1px solid #c6c9cb;
    background-color: #dfe0e2;
}

/* graphics area */
.viewport {
    position: relative;
    flex: 1;
    min-width: 0;
    overflow: hidden;
    background-color: #e8e9ed;
}

.scene {
    width: 100%;
    height: 100%;
}

.axis {
    fill: #111;
    font-family: "Liberation Mono", monospace;
    font-size: 14px;
}

.axis .csys {
    fill: #84555a;
    font-size: 15px;
}

.wm-name {
    fill: #8fcfa8;
    font-family: "Noto Sans CJK SC", sans-serif;
    font-size: 30px;
    font-weight: 900;
}

.wm-url {
    fill: #b3d9d3;
    font-size: 15px;
}

.view-tools {
    position: absolute;
    top: 8px;
    right: 0;
    display: flex;
    align-items: center;
    gap: 3px;
    height: 32px;
    padding: 0 2px 0 4px;
    border: 1px solid #9a9fa2;
    border-right: none;
    background-color: #f8fafc;
}

.view-tools button {
    position: relative;
    justify-content: center;
    width: 23px;
    height: 23px;
}

.view-tools svg {
    width: 16px;
    height: 16px;
}

.view-tools .drop {
    width: 24px;
}

.view-tools .drop::after {
    content: "";
    position: absolute;
    right: 0;
    bottom: 1px;
    width: 4px;
    height: 4px;
    background-color: #444;
    clip-path: polygon(100% 0, 100% 100%, 0 100%);
}

.view-tools .on {
    border: 1px solid #a6a9ab;
    background-color: #dedfe1;
}
```
